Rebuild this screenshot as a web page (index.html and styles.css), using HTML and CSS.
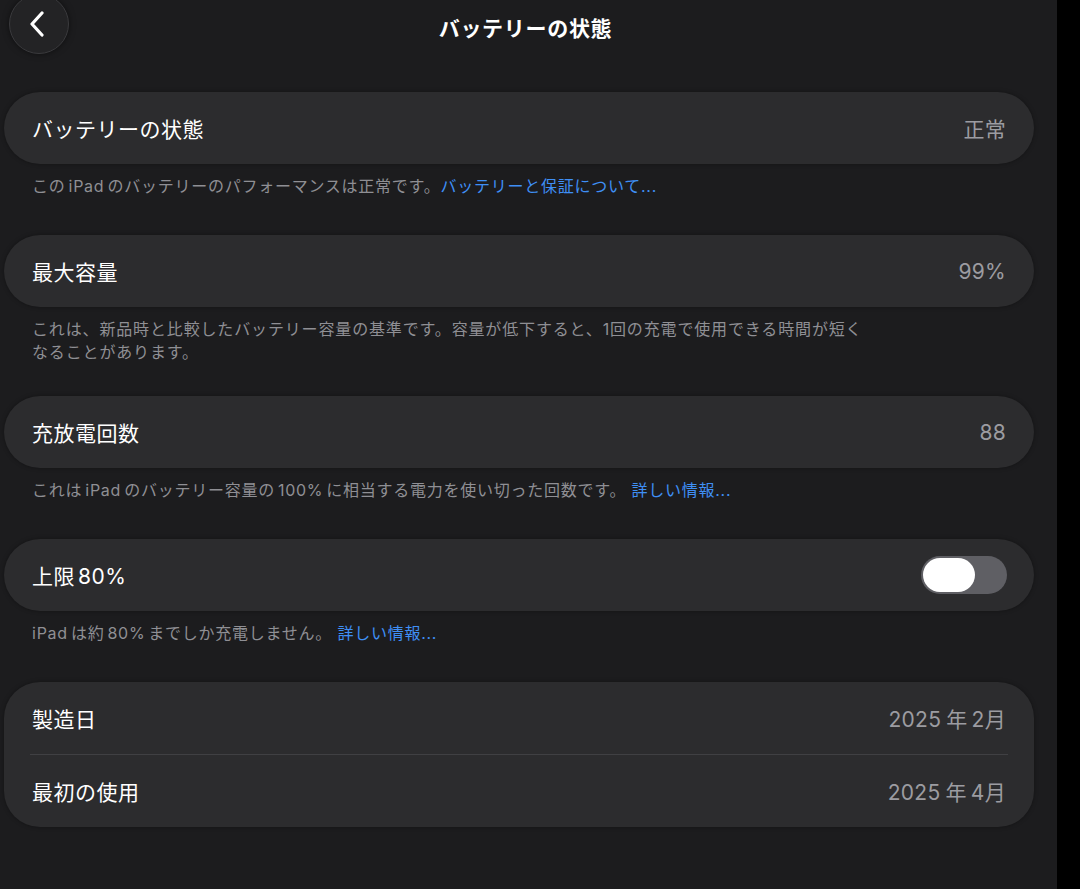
FILE: index.html
```html
<!DOCTYPE html>
<html lang="ja">
<head>
<meta charset="utf-8">
<title>バッテリーの状態</title>
<link rel="stylesheet" href="styles.css">
</head>
<body>
<div class="device">
  <div class="screen">
    <header class="nav">
      <div class="nav-side">
        <button class="back" aria-label="戻る">
          <svg width="18" height="26" viewBox="0 0 18 26"><path d="M14 2 L4 13 L14 24" fill="none" stroke="#fff" stroke-width="3.2" stroke-linecap="round" stroke-linejoin="round"/></svg>
        </button>
      </div>
      <h1 class="title">バッテリーの状態</h1>
      <div class="nav-side"></div>
    </header>

    <main class="content">
      <section class="group">
        <div class="card">
          <div class="row"><span class="label">バッテリーの状態</span><span class="value">正常</span></div>
        </div>
        <p class="note">この<span class="lat">iPad</span>のバッテリーのパフォーマンスは正常です。<a class="link">バッテリーと保証について...</a></p>
      </section>

      <section class="group">
        <div class="card">
          <div class="row"><span class="label">最大容量</span><span class="value">99%</span></div>
        </div>
        <p class="note note-two">これは、新品時と比較したバッテリー容量の基準です。容量が低下すると、1回の充電で使用できる時間が短く<br>なることがあります。</p>
      </section>

      <section class="group">
        <div class="card">
          <div class="row"><span class="label">充放電回数</span><span class="value">88</span></div>
        </div>
        <p class="note">これは<span class="lat">iPad</span>のバッテリー容量の<span class="lat">100%</span>に相当する電力を使い切った回数です。 <a class="link">詳しい情報...</a></p>
      </section>

      <section class="group">
        <div class="card">
          <div class="row"><span class="label">上限<span class="lat">80%</span></span><span class="toggle"><span class="knob"></span></span></div>
        </div>
        <p class="note">iPad<span class="lat-l">は約</span><span class="lat">80%</span>までしか充電しません。 <a class="link">詳しい情報...</a></p>
      </section>

      <section class="group">
        <div class="card">
          <div class="row"><span class="label">製造日</span><span class="value">2025<span class="lat-v">年</span>2月</span></div>
          <div class="sep"></div>
          <div class="row"><span class="label">最初の使用</span><span class="value">2025<span class="lat-v">年</span>4月</span></div>
        </div>
      </section>
    </main>
  </div>
  <div class="edge"></div>
</div>
</body>
</html>
```

FILE: styles.css
```css
* { box-sizing: border-box; }
html, body {
  margin: 0;
  padding: 0;
  background: #000;
}
body {
  font-family: "Inter", "Noto Sans CJK JP", sans-serif;
  color: #fff;
  width: 1080px;
  height: 889px;
  overflow: hidden;
}
.device {
  display: flex;
  width: 1080px;
  height: 889px;
}
.screen {
  width: 1057px;
  background: #1c1c1e;
  overflow: hidden;
}
.edge {
  flex: 1;
  background: #000;
}
.nav {
  display: grid;
  grid-template-columns: 1fr auto 1fr;
  align-items: center;
  height: 47px;
}
.nav-side { display: flex; align-items: center; }
.back {
  margin-left: 9px;
  margin-top: -6px;
  width: 60px;
  height: 60px;
  border-radius: 50%;
  background: #232325;
  border: 1px solid #3a3a3d;
  box-shadow: 0 0 6px rgba(0,0,0,0.5);
  display: flex;
  align-items: center;
  justify-content: center;
  padding: 0 4px 0 0;
}
.title {
  margin: 0;
  font-size: 21px;
  font-weight: 700;
  letter-spacing: 0.7px;
  transform: translateX(-3px);
}
.content {
  padding: 45px 23px 0 4px;
}
.card {
  background: #2c2c2e;
  border-radius: 36px;
  padding: 0 28px;
  box-shadow: 0 0 4px rgba(0,0,0,0.35);
}
.row {
  height: 72px;
  display: flex;
  align-items: center;
  justify-content: space-between;
}
.label {
  font-size: 21px;
  color: #fff;
  letter-spacing: 0.5px;
}
.value {
  font-size: 21px;
  color: #9c9ca1;
  letter-spacing: 0.3px;
}
.lat {
  margin: 0 3px;
}
.lat-l {
  margin-left: 3px;
}
.lat-v {
  margin: 0 4px 0 5px;
}
.sep {
  height: 1px;
  background: #404043;
  margin: 0 -2px;
}
.note {
  margin: 0;
  padding: 11px 28px 37px 28px;
  font-size: 16px;
  line-height: 23px;
  color: #8f8f94;
  letter-spacing: 0.75px;
}
.note-two {
  padding-bottom: 32px;
  letter-spacing: 0.85px;
}
.link {
  color: #3f8ff5;
}
.toggle {
  width: 86px;
  height: 38px;
  border-radius: 19px;
  background: #5f5f64;
  display: flex;
  align-items: center;
  padding: 0 2px;
  margin-right: -1px;
}
.knob {
  width: 52px;
  height: 34px;
  border-radius: 17px;
  background: #fff;
}
```
